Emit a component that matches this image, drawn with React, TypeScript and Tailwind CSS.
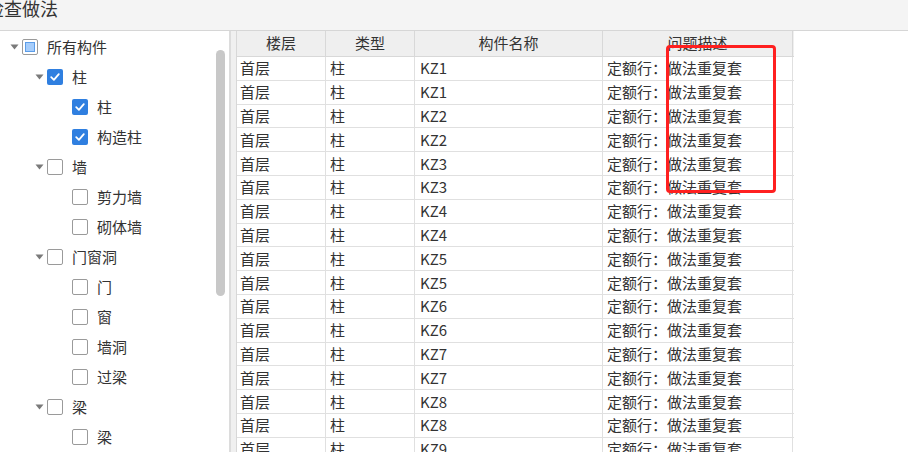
import React from "react";

type Node = { label: string; level: number; state: "none" | "checked" | "partial"; arrow?: boolean };

const tree: Node[] = [
  { label: "所有构件", level: 0, state: "partial", arrow: true },
  { label: "柱", level: 1, state: "checked", arrow: true },
  { label: "柱", level: 2, state: "checked" },
  { label: "构造柱", level: 2, state: "checked" },
  { label: "墙", level: 1, state: "none", arrow: true },
  { label: "剪力墙", level: 2, state: "none" },
  { label: "砌体墙", level: 2, state: "none" },
  { label: "门窗洞", level: 1, state: "none", arrow: true },
  { label: "门", level: 2, state: "none" },
  { label: "窗", level: 2, state: "none" },
  { label: "墙洞", level: 2, state: "none" },
  { label: "过梁", level: 2, state: "none" },
  { label: "梁", level: 1, state: "none", arrow: true },
  { label: "梁", level: 2, state: "none" },
];

const names = ["KZ1", "KZ1", "KZ2", "KZ2", "KZ3", "KZ3", "KZ4", "KZ4", "KZ5", "KZ5", "KZ6", "KZ6", "KZ7", "KZ7", "KZ8", "KZ8", "KZ9"];

function Box({ state }: { state: Node["state"] }) {
  if (state === "checked") {
    return (
      <div className="w-[16px] h-[16px] rounded-[2px] bg-[#2f7fe0] flex items-center justify-center">
        <svg width="12" height="12" viewBox="0 0 12 12">
          <path d="M2.2 6.2 L4.9 8.8 L9.8 3.2" fill="none" stroke="white" strokeWidth="1.8" strokeLinecap="round" strokeLinejoin="round" />
        </svg>
      </div>
    );
  }
  if (state === "partial") {
    return (
      <div className="w-[16px] h-[16px] rounded-[2px] border border-[#9a9a9a] bg-white flex items-center justify-center">
        <div className="w-[10px] h-[10px] bg-[#a6cdfb] border border-[#5c9de8]" />
      </div>
    );
  }
  return <div className="w-[16px] h-[16px] rounded-[2px] border border-[#9a9a9a] bg-white" />;
}

export default function App() {
  const font = { fontFamily: '"Noto Sans CJK SC", "Noto Sans", sans-serif' };
  return (
    <div className="w-[908px] h-[452px] overflow-hidden bg-white text-[#333333] relative" style={font}>
      {/* title bar */}
      <div className="h-[31px] bg-[#f4f4f4] border-b border-[#d6d6d6] flex items-start">
        <span className="ml-[-14px] mt-[-5px] text-[18px] leading-[26px] text-[#333] whitespace-nowrap">检查做法</span>
      </div>
      <div className="flex h-[421px]">
        {/* left tree */}
        <div className="w-[231px] h-full border-r-2 border-[#dcdcdc] bg-white flex">
          <div className="flex-1 flex flex-col pt-[1px]">
            {tree.map((n, i) => (
              <div key={i} className="h-[30px] flex items-center" style={{ paddingLeft: 7 + n.level * 25 }}>
                <div className="w-[15px] flex items-center justify-center">
                  {n.arrow && (
                    <svg width="9" height="6" viewBox="0 0 9 6">
                      <path d="M0.5 0.5 L8.5 0.5 L4.5 5.5 Z" fill="#7a7a7a" />
                    </svg>
                  )}
                </div>
                <Box state={n.state} />
                <span className="ml-[9px] text-[15px] leading-[20px] text-[#333]">{n.label}</span>
              </div>
            ))}
          </div>
          <div className="w-[15px] pt-[19px] pl-[2px]">
            <div className="w-[9px] h-[246px] rounded-full bg-[#c8c8c8]" />
          </div>
        </div>
        {/* gap */}
        <div className="w-[5px] h-full bg-[#f0f0f0]" />
        {/* table */}
        <div className="flex-1 h-full bg-white relative">
          <div className="w-[558px] border-l border-[#d8d8d8]">
            <div className="flex h-[26px] bg-[#efefef] border-b border-[#d8d8d8] text-[15px]">
              <div className="w-[89px] border-r border-[#d8d8d8] flex items-center justify-center">楼层</div>
              <div className="w-[89px] border-r border-[#d8d8d8] flex items-center justify-center">类型</div>
              <div className="w-[188px] border-r border-[#d8d8d8] flex items-center justify-center">构件名称</div>
              <div className="w-[190px] border-r border-[#d8d8d8] flex items-center justify-center">问题描述</div>
            </div>
            {names.map((nm, i) => (
              <div key={i} className="flex h-[23.8px] border-b border-[#e0e0e0] text-[15px] leading-[20px]">
                <div className="w-[89px] border-r border-[#e0e0e0] flex items-center pl-[3px] whitespace-nowrap">首层</div>
                <div className="w-[89px] border-r border-[#e0e0e0] flex items-center pl-[4px]">柱</div>
                <div className="w-[188px] border-r border-[#e0e0e0] flex items-center pl-[5px]">{nm}</div>
                <div className="w-[190px] border-r border-[#e0e0e0] flex items-center pl-[4px] whitespace-nowrap">定额行：做法重复套</div>
              </div>
            ))}
          </div>
          <div className="absolute left-[430px] top-[14px] w-[110px] h-[148px] border-[3px] border-[#ff2020] rounded-[4px]" />
        </div>
      </div>
    </div>
  );
}
